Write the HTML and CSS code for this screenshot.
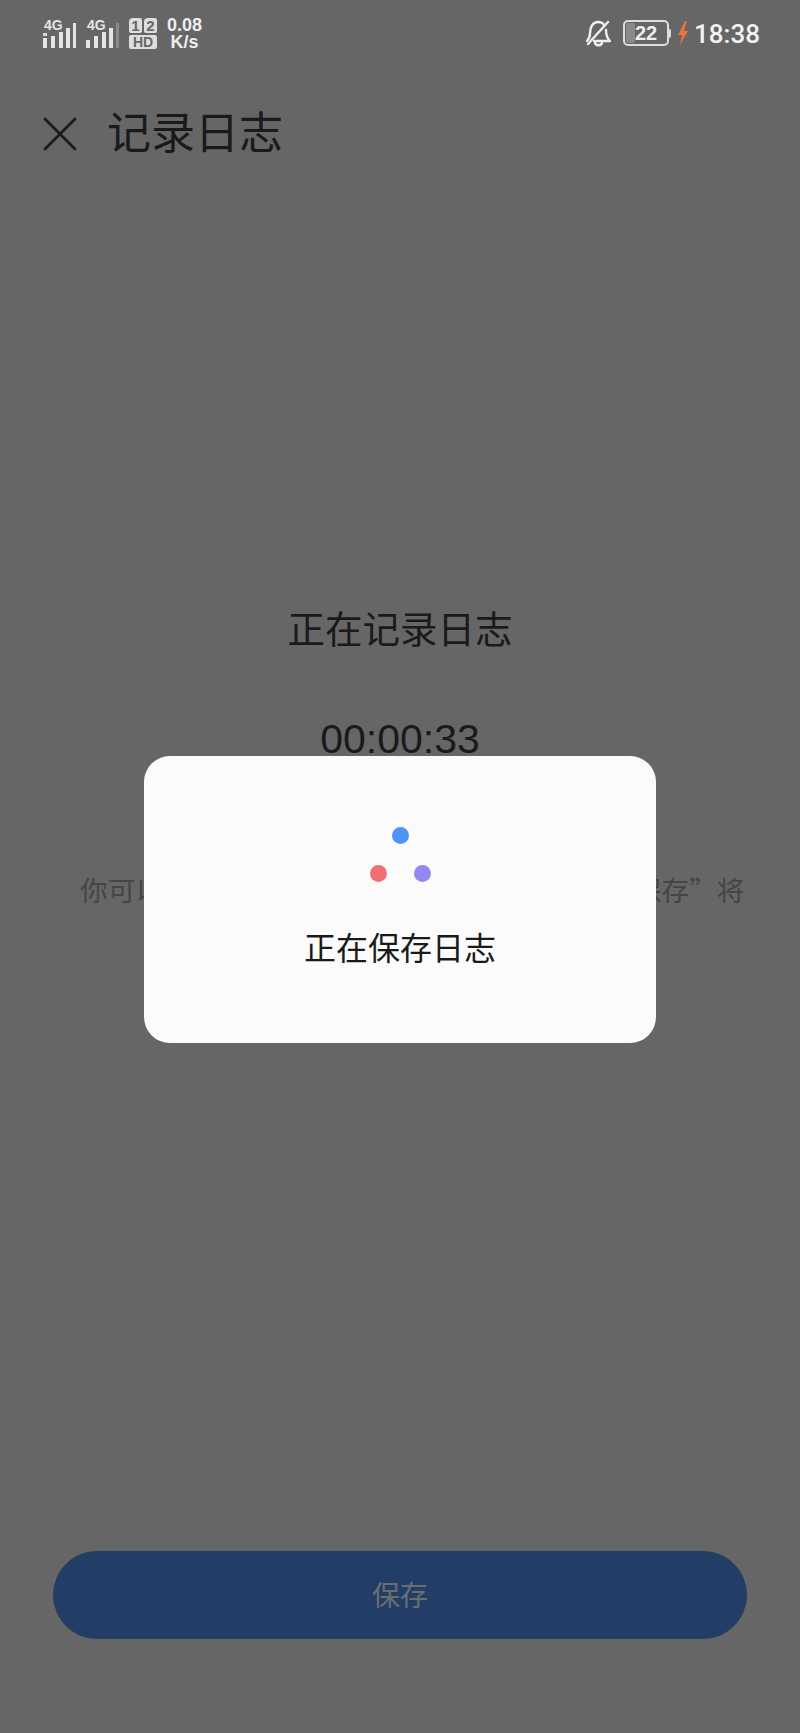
FILE: index.html
```html
<!DOCTYPE html>
<html lang="zh-CN">
<head>
    <meta charset="UTF-8">
    <meta name="viewport" content="width=device-width, initial-scale=1.0">
    <title>记录日志</title>
    <link rel="stylesheet" href="styles.css">
</head>
<body>
    <div class="screen">
        <div class="status-bar">
            <div class="status-left">
                <div class="signal">
                    <span class="signal-label">4G</span>
                    <svg class="signal-bars" width="33" height="26" viewBox="0 0 33 26">
                        <rect x="0" y="10" width="4" height="3" fill="#d8d8d8"/>
                        <rect x="0" y="15" width="4" height="10" fill="#e4e4e4"/>
                        <rect x="8" y="13" width="4" height="12" fill="#e4e4e4"/>
                        <rect x="16" y="9" width="4" height="16" fill="#e4e4e4"/>
                        <rect x="23" y="5" width="4" height="20" fill="#e4e4e4"/>
                        <rect x="30" y="0" width="3" height="25" fill="#e4e4e4"/>
                    </svg>
                </div>
                <div class="signal">
                    <span class="signal-label">4G</span>
                    <svg class="signal-bars" width="33" height="26" viewBox="0 0 33 26">
                        <rect x="0" y="17" width="4" height="8" fill="#e4e4e4"/>
                        <rect x="8" y="13" width="4" height="12" fill="#e4e4e4"/>
                        <rect x="16" y="9" width="4" height="16" fill="#e4e4e4"/>
                        <rect x="23" y="5" width="4" height="20" fill="#e4e4e4"/>
                        <rect x="30" y="0" width="3" height="25" fill="#8a8a8a"/>
                    </svg>
                </div>
                <div class="sim">
                    <div class="sim-row">
                        <span class="sim-num">1</span>
                        <span class="sim-num">2</span>
                    </div>
                    <span class="sim-hd">HD</span>
                </div>
                <div class="speed">
                    <span>0.08</span>
                    <span>K/s</span>
                </div>
            </div>
            <div class="status-right">
                <svg class="bell" width="26" height="28" viewBox="0 0 26 28" fill="none" stroke="#eeeeee" stroke-width="2.4" stroke-linecap="round" stroke-linejoin="round">
                    <path d="M2 22c2-2 3-4 3-8 0-6 3-11 8-11 3 0 5 1 6 3"/>
                    <path d="M21 11c0 5 1 8 4 11H9"/>
                    <path d="M10 24c1 3 6 3 7 0"/>
                    <path d="M3 25 23 3"/>
                </svg>
                <div class="battery">
                    <div class="battery-body">
                        <div class="battery-level"></div>
                        <span class="battery-text">22</span>
                    </div>
                    <div class="battery-tip"></div>
                </div>
                <svg class="bolt" width="12" height="24" viewBox="0 0 12 24">
                    <path d="M8 0 1 14h4L3 24l8-14H7l3-10z" fill="#e8763a"/>
                </svg>
                <span class="clock">18:38</span>
            </div>
        </div>

        <div class="title-bar">
            <svg class="close-icon" width="34" height="34" viewBox="0 0 34 34" stroke="#1a1a1a" stroke-width="2.6" stroke-linecap="round">
                <path d="M2 2 32 32"/>
                <path d="M32 2 2 32"/>
            </svg>
            <h1 class="page-title">记录日志</h1>
        </div>

        <div class="record-info">
            <h2 class="record-title">正在记录日志</h2>
            <div class="record-time">00:00:33</div>
            <p class="record-hint">你可以继续操作手机复现问题，完成后点击“保存”将</p>
        </div>

        <div class="save-btn">保存</div>

        <div class="dialog">
            <div class="dots">
                <span class="dot dot-blue"></span>
                <div class="dots-row">
                    <span class="dot dot-red"></span>
                    <span class="dot dot-purple"></span>
                </div>
            </div>
            <div class="dialog-text">正在保存日志</div>
        </div>
    </div>
</body>
</html>
```

FILE: styles.css
```css
body {
    margin: 0;
    padding: 0;
    background-color: #666666;
    font-family: "Liberation Sans", "Noto Sans CJK SC", sans-serif;
}

.screen {
    position: relative;
    width: 800px;
    height: 1733px;
    overflow: hidden;
    display: flex;
    flex-direction: column;
    background-color: #666666;
}

/* status bar */
.status-bar {
    display: flex;
    justify-content: space-between;
    align-items: center;
    height: 66px;
    padding: 0 40px 0 43px;
    color: #eeeeee;
}

.status-left, .status-right {
    display: flex;
    align-items: center;
}

.signal {
    position: relative;
    width: 33px;
    height: 32px;
    margin-right: 10px;
}

.signal-bars {
    position: absolute;
    left: 0;
    bottom: 0;
}

.signal-label {
    position: absolute;
    left: 1px;
    top: 1px;
    font-size: 14px;
    font-weight: bold;
    line-height: 14px;
    color: #e4e4e4;
}

.sim {
    display: flex;
    flex-direction: column;
    gap: 2px;
    width: 28px;
    margin: 0 10px 0 0;
}

.sim-row {
    display: flex;
    justify-content: space-between;
}

.sim-num {
    width: 13px;
    height: 15px;
    border-radius: 4px 2px 2px 2px;
    background-color: #dddddd;
    color: #666666;
    font-size: 15px;
    font-weight: bold;
    line-height: 15px;
    text-align: center;
}

.sim-hd {
    height: 14px;
    border-radius: 2px;
    background-color: #dddddd;
    color: #666666;
    font-size: 14px;
    font-weight: bold;
    line-height: 14px;
    text-align: center;
}

.speed {
    display: flex;
    flex-direction: column;
    align-items: center;
    padding-top: 2px;
    font-size: 18px;
    font-weight: bold;
    line-height: 17px;
    color: #eeeeee;
}

.bell {
    margin-right: 12px;
}

.battery {
    display: flex;
    align-items: center;
    margin-right: 6px;
}

.battery-body {
    position: relative;
    width: 42px;
    height: 22px;
    border: 2px solid #dddddd;
    border-radius: 5px;
    display: flex;
    align-items: center;
    justify-content: center;
}

.battery-level {
    position: absolute;
    left: 1px;
    top: 1px;
    bottom: 1px;
    width: 9px;
    background-color: #8a8a8a;
    border-radius: 2px;
}

.battery-text {
    position: relative;
    font-size: 20px;
    font-weight: bold;
    color: #eeeeee;
}

.battery-tip {
    width: 2px;
    height: 9px;
    background-color: #dddddd;
    border-radius: 0 2px 2px 0;
}

.bolt {
    margin-right: 5px;
}

.clock {
    padding-top: 2px;
    font-family: Roboto, sans-serif;
    font-size: 26px;
    font-weight: 500;
    color: #f2f2f2;
}

/* title bar */
.title-bar {
    display: flex;
    align-items: center;
    height: 44px;
    padding: 0 0 0 43px;
    margin-top: 46px;
}

.close-icon {
    margin-right: 30px;
}

.page-title {
    margin: 0;
    font-size: 44px;
    font-weight: 400;
    line-height: 44px;
    color: #1a1a1a;
}

/* record info */
.record-info {
    display: flex;
    flex-direction: column;
    align-items: center;
    margin-top: 449px;
}

.record-title {
    margin: 0;
    font-size: 37.5px;
    font-weight: 400;
    line-height: 50px;
    color: #1a1a1a;
}

.record-time {
    margin-top: 59px;
    font-family: "Liberation Sans", sans-serif;
    font-size: 41px;
    line-height: 50px;
    color: #1a1a1a;
}

.record-hint {
    align-self: flex-start;
    margin: 105px 0 0 80px;
    font-family: "Noto Sans CJK SC", sans-serif;
    font-size: 27.7px;
    line-height: 40px;
    color: #454545;
    white-space: nowrap;
}

/* bottom button */
.save-btn {
    position: absolute;
    left: 53px;
    right: 53px;
    bottom: 94px;
    height: 88px;
    border-radius: 44px;
    background-color: #223e66;
    color: #6a6e6e;
    font-size: 28px;
    line-height: 92px;
    text-align: center;
}

/* saving dialog */
.dialog {
    position: absolute;
    left: 144px;
    top: 756px;
    width: 512px;
    height: 287px;
    border-radius: 26px;
    background-color: #fbfbfb;
    display: flex;
    flex-direction: column;
    align-items: center;
}

.dots {
    display: flex;
    flex-direction: column;
    align-items: center;
    gap: 21px;
    margin-top: 71px;
}

.dots-row {
    display: flex;
    gap: 27px;
}

.dot {
    display: block;
    width: 17px;
    height: 17px;
    border-radius: 50%;
}

.dot-blue {
    background-color: #4f94f5;
}

.dot-red {
    background-color: #f36f6f;
}

.dot-purple {
    background-color: #9389f2;
}

.dialog-text {
    margin-top: 47px;
    font-size: 32px;
    line-height: 40px;
    color: #1a1a1a;
}
```
